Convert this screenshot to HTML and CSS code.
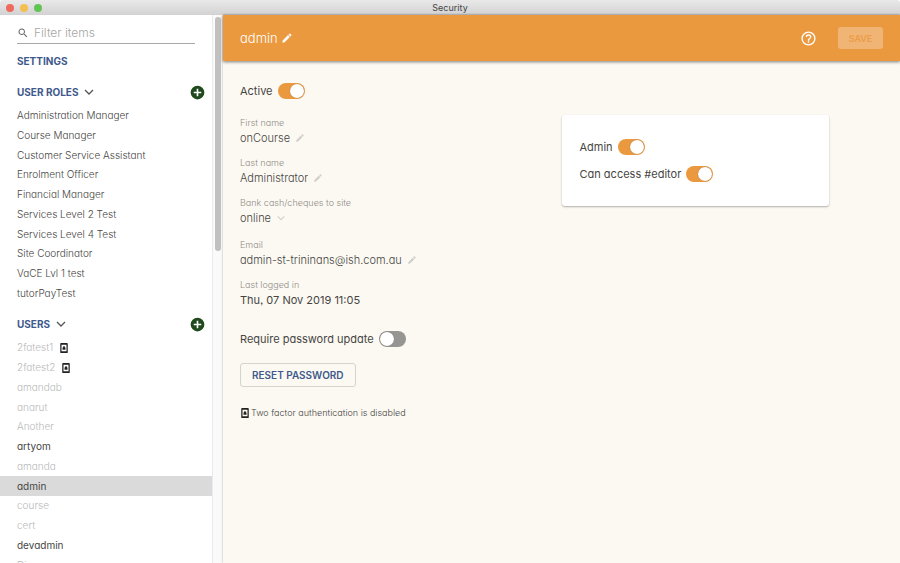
FILE: index.html
```html
<!DOCTYPE html>
<html lang="en">
<head>
<meta charset="utf-8">
<meta name="viewport" content="width=device-width, initial-scale=1">
<title>Security</title>
<link rel="stylesheet" href="styles.css">
</head>
<body>
<svg class="sprite" aria-hidden="true">
  <symbol id="pencil" viewBox="0 0 24 24"><path d="M3 17.25V21h3.75L17.81 9.94l-3.75-3.75L3 17.25zM20.71 7.04a1 1 0 0 0 0-1.41l-2.34-2.34a1 1 0 0 0-1.41 0l-1.83 1.83 3.75 3.75 1.83-1.83z"/></symbol>
  <symbol id="chevron" viewBox="0 0 24 24"><path d="M4 8l8 8 8-8" fill="none" stroke="currentColor" stroke-width="2.6"/></symbol>
  <symbol id="add" viewBox="0 0 24 24"><path d="M12 1a11 11 0 1 0 0 22 11 11 0 0 0 0-22zm6 12.300h-4.700V18h-2.600v-4.700H6v-2.600h4.700V6h2.600v4.700H18z"/></symbol>
  <symbol id="phone-lock" viewBox="0 0 24 24"><path fill-rule="evenodd" d="M5 0h14a2 2 0 0 1 2 2v20a2 2 0 0 1-2 2H5a2 2 0 0 1-2-2V2a2 2 0 0 1 2-2zm1 4v16h12V4z"/><path d="M8.500 11h1v-1a2.500 2.500 0 0 1 5 0v1h1v5h-7z"/></symbol>
</svg>

<header class="titlebar">
  <div class="lights"><span class="light close"></span><span class="light minimise"></span><span class="light expand"></span></div>
  <span class="window-title">Security</span>
</header>

<div class="app">
  <aside class="sidebar">
    <div class="nav">
      <label class="filter">
        <svg class="search-icon" viewBox="0 0 24 24" aria-hidden="true"><path d="M15.500 14h-.8l-.3-.3A6.500 6.500 0 1 0 13.700 14.400l.3.3v.8l5 5 1.500-1.500zM9.500 14a4.500 4.500 0 1 1 0-9 4.500 4.500 0 0 1 0 9z"/></svg>
        <input type="search" placeholder="Filter items" aria-label="Filter items">
      </label>
      <h2 class="group"><a href="#settings">SETTINGS</a></h2>

      <div class="group-row">
        <h2 class="group">USER ROLES</h2>
        <button class="icon-button fold" aria-label="Collapse user roles"><svg><use href="#chevron"/></svg></button>
        <button class="icon-button add" aria-label="Add user role"><svg><use href="#add"/></svg></button>
      </div>
      <ul class="items roles">
        <li><a href="#r1">Administration Manager</a></li>
        <li><a href="#r2">Course Manager</a></li>
        <li><a href="#r3">Customer Service Assistant</a></li>
        <li><a href="#r4">Enrolment Officer</a></li>
        <li><a href="#r5">Financial Manager</a></li>
        <li><a href="#r6">Services Level 2 Test</a></li>
        <li><a href="#r7">Services Level 4 Test</a></li>
        <li><a href="#r8">Site Coordinator</a></li>
        <li><a href="#r9">VaCE Lvl 1 test</a></li>
        <li><a href="#r10">tutorPayTest</a></li>
      </ul>

      <div class="group-row">
        <h2 class="group">USERS</h2>
        <button class="icon-button fold" aria-label="Collapse users"><svg><use href="#chevron"/></svg></button>
        <button class="icon-button add" aria-label="Add user"><svg><use href="#add"/></svg></button>
      </div>
      <ul class="items users">
        <li class="inactive"><a href="#u1">2fatest1</a><svg class="lock"><use href="#phone-lock"/></svg></li>
        <li class="inactive"><a href="#u2">2fatest2</a><svg class="lock"><use href="#phone-lock"/></svg></li>
        <li class="inactive"><a href="#u3">amandab</a></li>
        <li class="inactive"><a href="#u4">anarut</a></li>
        <li class="inactive"><a href="#u5">Another</a></li>
        <li class="active"><a href="#u6">artyom</a></li>
        <li class="inactive"><a href="#u7">amanda</a></li>
        <li class="active selected"><a href="#u8" aria-current="page">admin</a></li>
        <li class="inactive"><a href="#u9">course</a></li>
        <li class="inactive"><a href="#u10">cert</a></li>
        <li class="active"><a href="#u11">devadmin</a></li>
        <li class="inactive"><a href="#u12">Dima</a></li>
      </ul>
    </div>
    <div class="scroll-track"><div class="scroll-thumb"></div></div>
  </aside>

  <main class="main">
    <div class="appbar">
      <h1>admin</h1>
      <button class="icon-button rename" aria-label="Edit login"><svg><use href="#pencil"/></svg></button>
      <button class="icon-button help" aria-label="Help"><svg viewBox="0 0 24 24"><path d="M11 18h2v-2h-2v2zm1-16a10 10 0 1 0 0 20 10 10 0 0 0 0-20zm0 18a8 8 0 1 1 0-16 8 8 0 0 1 0 16zm0-14a4 4 0 0 0-4 4h2a2 2 0 1 1 4 0c0 2-3 1.750-3 5h2c0-2.250 3-2.500 3-5a4 4 0 0 0-4-4z"/></svg></button>
      <button class="save" disabled>SAVE</button>
    </div>

    <form class="content">
      <div class="details">
        <label class="switch-row">Active <input type="checkbox" class="switch" role="switch" checked></label>
        <div class="fields">
          <div class="field">
            <label for="first">First name</label>
            <div class="value"><input id="first" type="text" value="onCourse"><svg class="edit"><use href="#pencil"/></svg></div>
          </div>
          <div class="field">
            <label for="last">Last name</label>
            <div class="value"><input id="last" type="text" value="Administrator"><svg class="edit"><use href="#pencil"/></svg></div>
          </div>
          <div class="field choice">
            <label for="site">Bank cash/cheques to site</label>
            <div class="value"><select id="site"><option>online</option></select><svg class="edit arrow"><use href="#chevron"/></svg></div>
          </div>
          <div class="field">
            <label for="email">Email</label>
            <div class="value"><input id="email" type="email" value="admin-st-trininans@ish.com.au"><svg class="edit"><use href="#pencil"/></svg></div>
          </div>
          <div class="field">
            <span class="caption">Last logged in</span>
            <div class="value fixed">Thu, 07 Nov 2019 11:05</div>
          </div>
        </div>
        <label class="switch-row">Require password update <input type="checkbox" class="switch" role="switch"></label>
        <button type="button" class="reset">RESET PASSWORD</button>
        <p class="note"><svg class="lock"><use href="#phone-lock"/></svg>Two factor authentication is disabled</p>
      </div>
      <section class="card" aria-label="Permissions">
        <label class="switch-row">Admin <input type="checkbox" class="switch" role="switch" checked></label>
        <label class="switch-row">Can access #editor <input type="checkbox" class="switch" role="switch" checked></label>
      </section>
    </form>
  </main>
</div>
</body>
</html>
```
FILE: styles.css
```css
* {
  box-sizing: border-box;
}

body {
  margin: 0;
  height: 100vh;
  display: flex;
  flex-direction: column;
  overflow: hidden;
  background: #fff;
  color: #464543;
  font-family: Inter, "Liberation Sans", sans-serif;
  font-feature-settings: "cv11", "ss03";
  font-size: 11px;
}

h1, h2, ul, p {
  margin: 0;
  padding: 0;
}

a {
  color: inherit;
  text-decoration: none;
}

input, select, button {
  margin: 0;
  padding: 0;
  border: 0;
  background: none;
  color: inherit;
  font: inherit;
  font-feature-settings: inherit;
}

svg {
  display: block;
  flex: none;
  fill: currentColor;
}

.sprite {
  display: none;
}

/* Window frame */
.titlebar {
  flex: none;
  display: grid;
  grid-template-columns: 1fr auto 1fr;
  align-items: center;
  height: 15px;
  background: linear-gradient(#e9e9e9, #d2d2d2);
  border-radius: 3px 3px 0 0;
}

.lights {
  display: flex;
  gap: 6px;
  padding-left: 6px;
}

.light {
  width: 8px;
  height: 8px;
  border-radius: 50%;
}

.close { background: #ee6a5f; }
.minimise { background: #f5bf4f; }
.expand { background: #61c554; }

.window-title {
  font-size: 9px;
  line-height: 15px;
  color: #444;
}

.app {
  flex: 1;
  min-height: 0;
  display: grid;
  grid-template-columns: 223px minmax(0, 1fr);
  grid-template-rows: minmax(0, 1fr);
}

/* Sidebar */
.sidebar {
  overflow: hidden;
  display: grid;
  grid-template-columns: minmax(0, 1fr) 11px;
  grid-template-rows: minmax(0, 1fr);
}

.nav {
  padding-top: 8px;
}

.filter {
  display: flex;
  align-items: center;
  gap: 5px;
  height: 21px;
  margin: 0 17px;
  border-bottom: 1px solid #a8a8a8;
}

.search-icon {
  width: 12px;
  height: 12px;
  color: #666;
}

.filter input {
  min-width: 0;
  flex: 1;
  outline: none;
  font-size: 12px;
  line-height: 16px;
  font-weight: 300;
}

.filter input::placeholder {
  color: #a6a6a6;
}

.group {
  font-size: 10px;
  line-height: 14px;
  font-weight: 700;
  color: #40598c;
}

.nav > .group {
  margin: 10px 17px;
}

.group-row {
  display: flex;
  align-items: center;
  gap: 5px;
  height: 14px;
  margin: 14px 7px 7px 17px;
}

.nav > .group + .group-row {
  margin-top: 17px;
}

.icon-button {
  display: block;
}

.icon-button svg {
  width: 100%;
  height: 100%;
}

.fold {
  width: 12px;
  height: 12px;
  color: #555;
}

.add {
  width: 15px;
  height: 15px;
  margin-left: auto;
  color: #1f4a1d;
}

.items {
  display: flex;
  flex-direction: column;
  list-style: none;
  font-size: 10px;
  line-height: 19px;
  font-weight: 300;
}

.roles { min-height: 197px; }
.users { min-height: 237px; }

.items li {
  flex: 1;
  display: flex;
  align-items: center;
  gap: 6px;
  padding: 0 17px;
}

.inactive { color: #b9b9b9; }
.active { font-weight: 400; }
.selected { background: #dadada; }

.lock {
  width: 10px;
  height: 10px;
  color: #222;
}

.scroll-track {
  padding: 2px;
  background: #fafafa;
  border-left: 1px solid #ebebeb;
}

.scroll-thumb {
  width: 6px;
  height: 43%;
  border-radius: 3px;
  background: #c1c1c1;
}

/* Main panel */
.main {
  background: #fcf9f2;
  box-shadow: 0 0 2px rgba(0, 0, 0, 0.3);
}

.appbar {
  display: flex;
  align-items: center;
  height: 46px;
  padding: 0 17px;
  background: #eb993e;
  color: #fff;
  box-shadow: 0 1px 3px rgba(0, 0, 0, 0.5);
}

.appbar h1 {
  font-size: 13px;
  font-weight: 300;
}

.rename {
  width: 12px;
  height: 12px;
  margin-left: 3px;
}

.help {
  width: 17px;
  height: 17px;
  margin-left: auto;
}

.save {
  width: 45px;
  height: 22px;
  margin-left: 21px;
  border-radius: 3px;
  background: #f0b475;
  color: #eb9d48;
  font-size: 9px;
  font-weight: 600;
}

.content {
  display: grid;
  grid-template-columns: 6fr 5fr 1fr;
  align-items: start;
  padding: 20px 17px;
}

.details {
  display: flex;
  flex-direction: column;
  align-items: flex-start;
}

.switch-row {
  display: flex;
  align-items: center;
  gap: 5px;
  height: 20px;
}

.switch {
  appearance: none;
  width: 27px;
  height: 16px;
  padding: 1px;
  border-radius: 8px;
  background: #969591;
}

.switch::before {
  content: "";
  display: block;
  width: 14px;
  height: 14px;
  border-radius: 50%;
  background: #fff;
  box-shadow: 0 0 1px rgba(0, 0, 0, 0.4);
}

.switch:checked {
  background: #eb993e;
}

.switch:checked::before {
  margin-left: 11px;
}

.fields {
  display: grid;
  gap: 10px;
  margin: 16px 0 20px;
}

.field label,
.caption {
  display: block;
  font-size: 9px;
  line-height: 12px;
  font-weight: 300;
  color: #8f8d89;
}

.value {
  display: flex;
  align-items: center;
  gap: 5px;
  height: 18px;
  font-weight: 300;
}

.value input,
.value select {
  appearance: none;
  field-sizing: content;
  outline: none;
}

.choice {
  padding-bottom: 2px;
}

.fixed {
  font-weight: 400;
}

.edit {
  width: 10px;
  height: 10px;
  color: #d2d0ca;
}

.reset {
  height: 24px;
  margin-top: 14px;
  padding: 0 11px;
  border: 1px solid #d5d3cd;
  border-radius: 3px;
  color: #40598c;
  font-size: 10px;
  font-weight: 600;
}

.note {
  display: flex;
  align-items: center;
  gap: 1px;
  margin-top: 20px;
  font-size: 9px;
  line-height: 12px;
  font-weight: 300;
}

.card {
  display: grid;
  gap: 7px;
  margin-top: 34px;
  padding: 22px 18px;
  border-radius: 3px;
  background: #fff;
  box-shadow: 0 1px 2px rgba(0, 0, 0, 0.3);
}
```
